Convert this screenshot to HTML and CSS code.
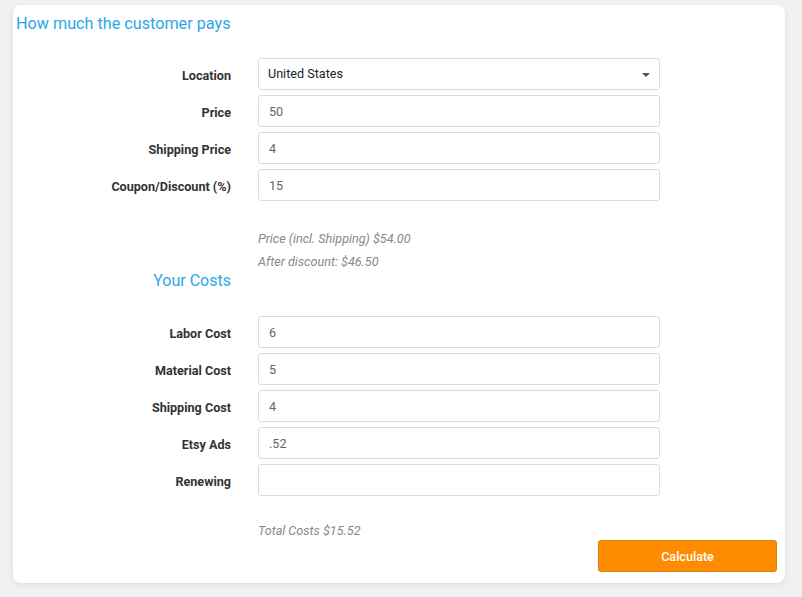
FILE: index.html
```html
<!DOCTYPE html>
<html>
<head>
<meta charset="utf-8">
<link rel="stylesheet" href="styles.css">
</head>
<body>
<div class="card">
  <h2 class="title">How much the customer pays</h2>
  <div class="form">
    <div class="row"><label class="lbl">Location</label><div class="field select"><span class="val dark">United States</span><span class="caret"></span></div></div>
    <div class="row"><label class="lbl">Price</label><div class="field"><span class="val">50</span></div></div>
    <div class="row"><label class="lbl">Shipping Price</label><div class="field"><span class="val">4</span></div></div>
    <div class="row"><label class="lbl">Coupon/Discount (%)</label><div class="field"><span class="val">15</span></div></div>
  </div>
  <div class="notes first">
    <p class="note">Price (incl. Shipping) $54.00</p>
    <p class="note">After discount: $46.50</p>
  </div>
  <div class="section-head"><h2 class="sub">Your Costs</h2></div>
  <div class="form costs">
    <div class="row"><label class="lbl">Labor Cost</label><div class="field"><span class="val">6</span></div></div>
    <div class="row"><label class="lbl">Material Cost</label><div class="field"><span class="val">5</span></div></div>
    <div class="row"><label class="lbl">Shipping Cost</label><div class="field"><span class="val">4</span></div></div>
    <div class="row"><label class="lbl">Etsy Ads</label><div class="field"><span class="val">.52</span></div></div>
    <div class="row"><label class="lbl">Renewing</label><div class="field"><span class="val"></span></div></div>
  </div>
  <div class="notes total">
    <p class="note">Total Costs $15.52</p>
  </div>
  <div class="actions"><button class="btn">Calculate</button></div>
</div>
</body>
</html>
```
FILE: styles.css
```css
html, body { margin: 0; padding: 0; }
body {
  background: #f1f1f1;
  font-family: Roboto, "Liberation Sans", sans-serif;
  width: 802px;
  height: 597px;
  overflow: hidden;
}
.card {
  box-sizing: border-box;
  margin: 5px 0 0 13px;
  width: 772px;
  height: 578px;
  background: #fff;
  border-radius: 8px;
  box-shadow: 0 2px 6px rgba(0,0,0,0.08);
  padding: 9px 0 0 0;
  position: relative;
}
.title {
  margin: 0 0 0 3px;
  font-size: 16.2px;
  font-weight: 400;
  color: #2aa8e6;
  line-height: 19px;
}
.form {
  margin-top: 25px;
  display: flex;
  flex-direction: column;
  gap: 5px;
}
.row {
  display: grid;
  grid-template-columns: 218px 402px;
  column-gap: 27px;
  align-items: center;
}
.lbl {
  text-align: right;
  font-size: 12.6px;
  font-weight: 700;
  color: #333;
  padding-top: 3px;
}
.field {
  box-sizing: border-box;
  height: 32px;
  border: 1px solid #dcdcdc;
  border-radius: 3px;
  display: flex;
  align-items: center;
  padding: 1px 10px 0 10px;
  background: #fff;
}
.select { justify-content: space-between; padding: 0 0 1px 9px; }
.val { font-size: 12.6px; color: #666; }
.val.dark { color: #222; }
.caret {
  width: 0; height: 0;
  border-left: 4px solid transparent;
  border-right: 4px solid transparent;
  border-top: 4px solid #555;
  margin-right: 9px;
  margin-top: 2px;
}
.notes {
  margin-left: 245px;
}
.notes.first { margin-top: 26px; }
.note {
  margin: 0;
  font-size: 12.6px;
  font-style: italic;
  color: #888;
  line-height: 23px;
}
.section-head {
  width: 218px;
  text-align: right;
  margin-top: -2px;
}
.sub {
  margin: 0;
  font-size: 16px;
  font-weight: 400;
  color: #2aa8e6;
  line-height: 19px;
}
.costs { margin-top: 26px; }
.notes.total { margin-top: 23px; }
.actions {
  display: flex;
  justify-content: flex-end;
  margin-top: -2px;
  padding-right: 8px;
}
.btn {
  width: 179px;
  height: 32px;
  background: #ff8c00;
  border: 1px solid #d9820d;
  border-radius: 3px;
  color: #fff;
  font-family: Roboto, "Liberation Sans", sans-serif;
  font-size: 12.6px;
  font-weight: 500;
}
```
